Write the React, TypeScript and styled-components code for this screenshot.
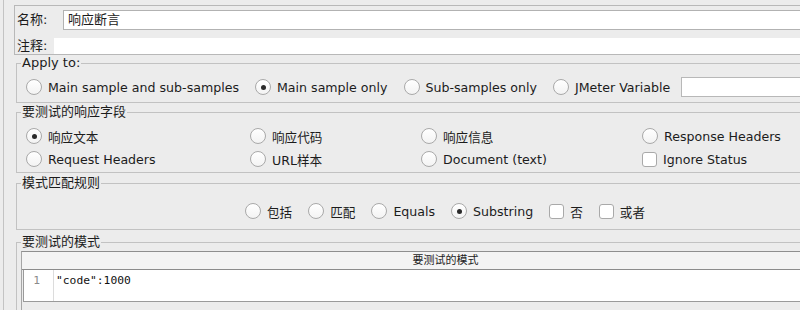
import React from 'react';
import styled, { createGlobalStyle } from 'styled-components';

const GlobalStyle = createGlobalStyle`
  html, body {
    margin: 0;
    padding: 0;
    background: #ececec;
  }
  body {
    font-family: "DejaVu Sans", "Noto Sans CJK SC", sans-serif;
    font-size: 12.6px;
    color: #1c1c1c;
  }
`;

const Screen = styled.div`
  width: 800px;
  height: 310px;
  overflow: hidden;
  display: flex;
  align-items: flex-start;
  background: #ececec;
`;

const Rail = styled.div`
  width: 3px;
  height: 310px;
  flex-shrink: 0;
  border-right: 1px solid #c3c3c3;
`;

const Content = styled.div`
  width: 862px;
  flex-shrink: 0;
  padding: 5px 0 0 10px;
`;

const NamePanel = styled.div`
  height: 48px;
  border: 1px solid #b8b8b8;
  display: flex;
  flex-direction: column;
  overflow: hidden;
`;

const FieldRow = styled.div<{ $top: number; $h: number }>`
  display: flex;
  align-items: center;
  height: ${(p) => p.$h}px;
  flex-shrink: 0;
  margin-top: ${(p) => p.$top}px;
  padding-left: 2px;
  line-height: 16px;
`;

const FieldLabel = styled.span<{ $w: number }>`
  width: ${(p) => p.$w}px;
  flex-shrink: 0;
  white-space: nowrap;
  font-size: 13px;
`;

const NameInput = styled.div`
  flex: 1;
  height: 18px;
  background: #fff;
  border: 1px solid #b2b2b2;
  border-right: none;
  padding-left: 4px;
  display: flex;
  align-items: center;
  font-size: 13px;
`;

const CommentInput = styled.div`
  flex: 1;
  height: 16px;
  background: #fff;
`;

const Group = styled.fieldset<{ $top: number }>`
  margin: ${(p) => p.$top}px 2px 0 2px;
  padding: 0;
  min-width: 0;
  border: 1px solid #c2c2c2;
`;

const Legend = styled.legend`
  margin-left: 4px;
  padding: 0 1px;
  line-height: 16px;
  font-size: 13px;
`;

const ApplyBody = styled.div`
  padding: 6px 0 5px 9px;
  display: flex;
  align-items: center;
  gap: 16px;
`;

const CenterBody = styled.div`
  padding: 10px 0 8px 0;
  display: flex;
  align-items: center;
  justify-content: center;
  gap: 16px;
`;

const FieldGrid = styled.div`
  padding: 6px 0 3px 9px;
  display: grid;
  grid-template-columns: 224px 171px 221px 1fr;
  row-gap: 3px;
`;

const Option = styled.label`
  display: flex;
  align-items: center;
  gap: 6px;
  height: 20px;
  white-space: nowrap;
`;

const Radio = styled.span<{ $on?: boolean }>`
  width: 14px;
  height: 14px;
  border-radius: 50%;
  border: 1px solid #a9a9a9;
  background: linear-gradient(#ffffff, #f3f3f3);
  display: flex;
  align-items: center;
  justify-content: center;
  flex-shrink: 0;
  &::after {
    content: '';
    width: 5px;
    height: 5px;
    border-radius: 50%;
    background: ${(p) => (p.$on ? '#2a2a2a' : 'transparent')};
  }
`;

const Check = styled.span`
  width: 13px;
  height: 13px;
  border-radius: 3px;
  border: 1px solid #a9a9a9;
  background: #fff;
  flex-shrink: 0;
`;

const VarInput = styled.div`
  width: 190px;
  height: 18px;
  margin-left: -5px;
  background: #fff;
  border: 1px solid #b8b8b8;
`;

const Table = styled.div`
  margin: 1px 4px 0 4px;
  height: 60px;
  border-top: 1px solid #8f8f8f;
  border-left: 1px solid #a6a6a6;
`;

const TableHeader = styled.div`
  height: 17px;
  line-height: 17px;
  text-align: center;
  font-size: 11px;
  background: #f4f4f4;
  border-bottom: 1px solid #8c8c8c;
`;

const Editor = styled.div`
  margin-left: 1px;
  height: 31px;
  background: #fff;
  border-left: 1px solid #9a9a9a;
  border-bottom: 1px solid #9a9a9a;
  display: flex;
`;

const Gutter = styled.div`
  width: 30px;
  border-right: 1px solid #dcdcdc;
  text-align: right;
  padding: 3px 13px 0 0;
  box-sizing: border-box;
  font-family: "DejaVu Sans Mono", monospace;
  font-size: 11.3px;
  line-height: 16px;
  color: #8a8a8a;
`;

const Code = styled.div`
  padding: 3px 0 0 2px;
  font-family: "DejaVu Sans Mono", monospace;
  font-size: 11.3px;
  line-height: 16px;
  color: #111;
`;

const RadioOpt = ({ label, on }: { label: string; on?: boolean }) => (
  <Option>
    <Radio $on={on} />
    {label}
  </Option>
);

const CheckOpt = ({ label }: { label: string }) => (
  <Option>
    <Check />
    {label}
  </Option>
);

const fields: { label: string; on?: boolean; check?: boolean }[] = [
  { label: '响应文本', on: true },
  { label: '响应代码' },
  { label: '响应信息' },
  { label: 'Response Headers' },
  { label: 'Request Headers' },
  { label: 'URL样本' },
  { label: 'Document (text)' },
  { label: 'Ignore Status', check: true },
];

export default function App() {
  return (
    <>
      <GlobalStyle />
      <Screen>
        <Rail />
        <Content>
          <NamePanel>
            <FieldRow $top={4} $h={20}>
              <FieldLabel $w={46}>名称:</FieldLabel>
              <NameInput>响应断言</NameInput>
            </FieldRow>
            <FieldRow $top={8} $h={16}>
              <FieldLabel $w={37}>注释:</FieldLabel>
              <CommentInput />
            </FieldRow>
          </NamePanel>

          <Group $top={0}>
            <Legend>Apply to:</Legend>
            <ApplyBody>
              <RadioOpt label="Main sample and sub-samples" />
              <RadioOpt label="Main sample only" on />
              <RadioOpt label="Sub-samples only" />
              <RadioOpt label="JMeter Variable" />
              <VarInput />
            </ApplyBody>
          </Group>

          <Group $top={1}>
            <Legend>要测试的响应字段</Legend>
            <FieldGrid>
              {fields.map((f) =>
                f.check ? <CheckOpt key={f.label} label={f.label} /> : <RadioOpt key={f.label} label={f.label} on={f.on} />
              )}
            </FieldGrid>
          </Group>

          <Group $top={2}>
            <Legend>模式匹配规则</Legend>
            <CenterBody>
              <RadioOpt label="包括" />
              <RadioOpt label="匹配" />
              <RadioOpt label="Equals" />
              <RadioOpt label="Substring" on />
              <CheckOpt label="否" />
              <CheckOpt label="或者" />
            </CenterBody>
          </Group>

          <Group $top={4}>
            <Legend>要测试的模式</Legend>
            <Table>
              <TableHeader>要测试的模式</TableHeader>
              <Editor>
                <Gutter>1</Gutter>
                <Code>"code":1000</Code>
              </Editor>
            </Table>
          </Group>
        </Content>
      </Screen>
    </>
  );
}
